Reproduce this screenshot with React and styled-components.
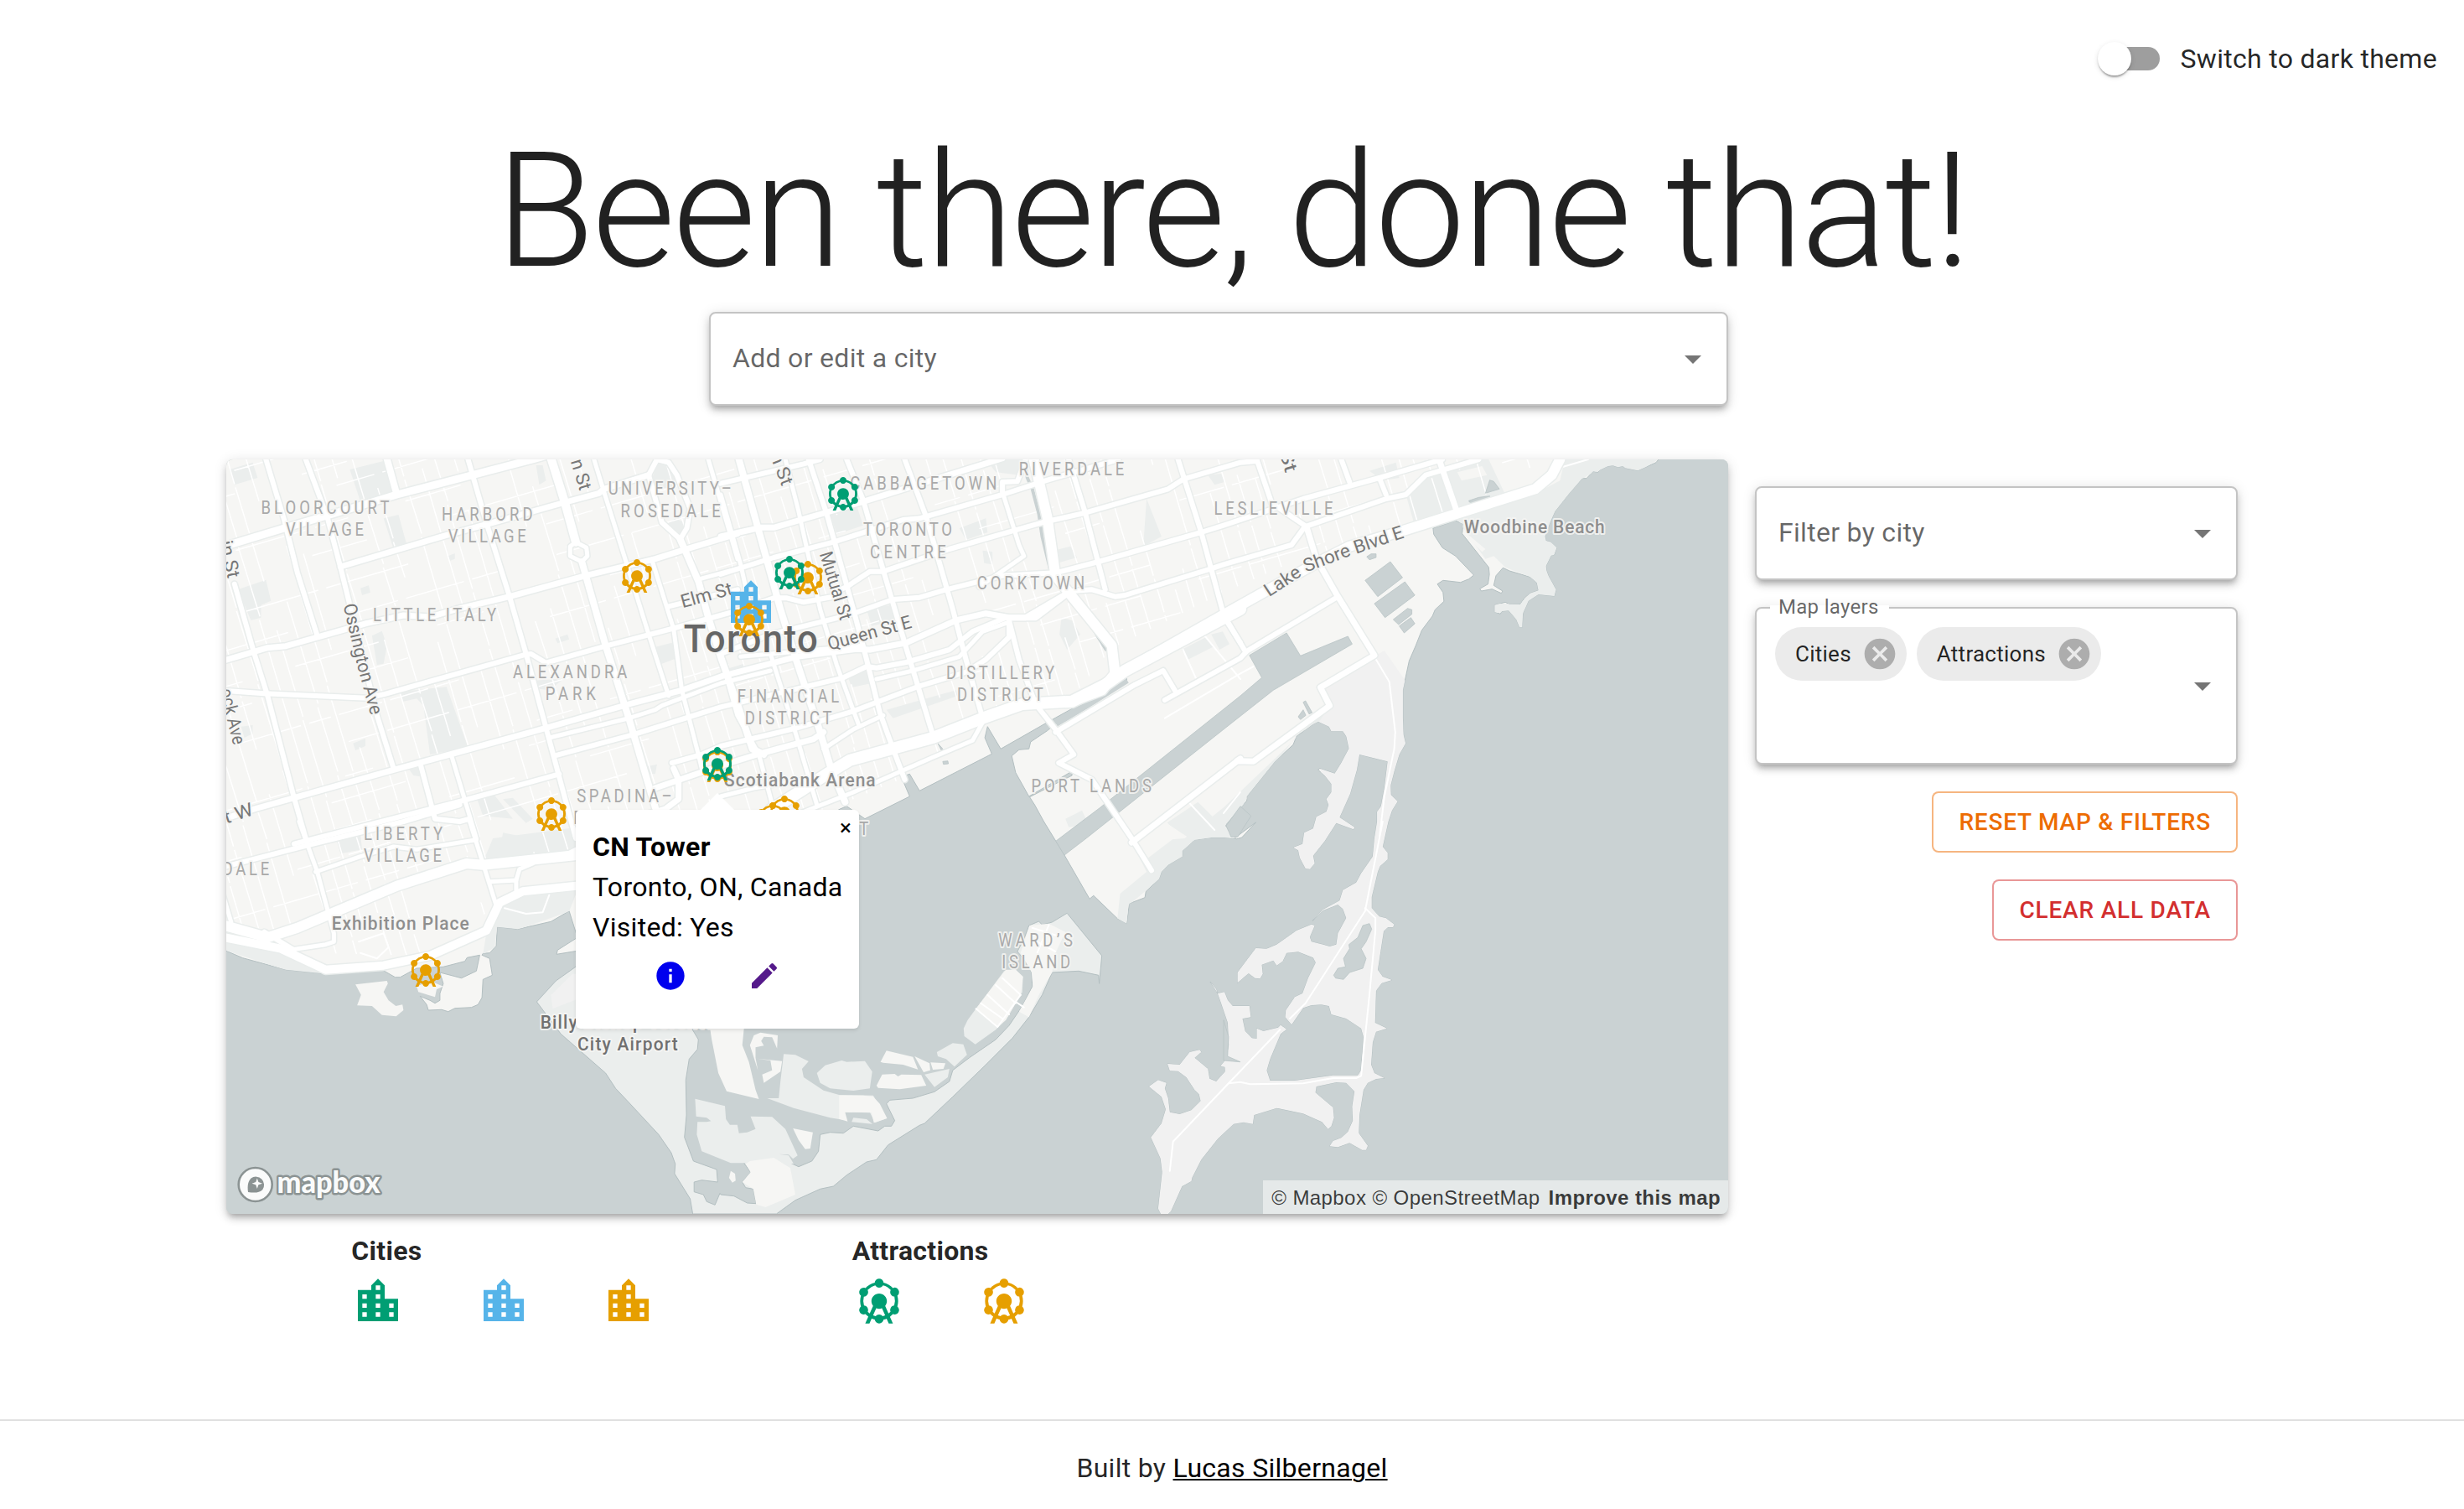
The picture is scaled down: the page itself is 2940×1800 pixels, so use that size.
import React from "react";
import styled, { createGlobalStyle } from "styled-components";
import {
  MdArrowDropDown,
  MdAttractions,
  MdCancel,
  MdEdit,
  MdInfo,
  MdLocationCity,
} from "react-icons/md";

const palette = {
  text: "rgba(0, 0, 0, 0.87)",
  muted: "rgba(0, 0, 0, 0.6)",
  green: "#009e73",
  blue: "#56b4e9",
  orange: "#e69f00",
  water: "#cad2d3",
  land: "#f6f6f4",
  park: "#ebeeed",
  spit: "#f1f1f1",
};

const GlobalStyle = createGlobalStyle`
  *, *::before, *::after { box-sizing: border-box; }
  body {
    margin: 0;
    background: #fff;
    color: ${palette.text};
    font-family: Roboto, "Liberation Sans", sans-serif;
    font-size: 32px;
    line-height: 1.5;
    letter-spacing: 0.00938em;
    -webkit-font-smoothing: antialiased;
  }
`;

const elevation =
  "0 6px 6px -4px rgba(0,0,0,.2), 0 6px 8px 0 rgba(0,0,0,.14), 0 2px 16px 0 rgba(0,0,0,.12)";

/* ---------- layout ---------- */

const Page = styled.div`
  display: flex;
  flex-direction: column;
  width: 2940px;
  height: 1800px;
`;

const Header = styled.header`
  display: flex;
  justify-content: flex-end;
  align-items: center;
  height: 140px;
  padding-right: 32px;
`;

const ThemeToggle = styled.label`
  display: flex;
  align-items: center;
  gap: 24px;
`;

const Track = styled.span`
  display: flex;
  align-items: center;
  width: 68px;
  height: 28px;
  border-radius: 14px;
  background: #9e9e9e;
`;

const Thumb = styled.span`
  width: 40px;
  height: 40px;
  flex: none;
  margin-left: -6px;
  border-radius: 50%;
  background: #fff;
  box-shadow: 0 4px 2px -2px rgba(0, 0, 0, 0.2), 0 2px 2px 0 rgba(0, 0, 0, 0.14),
    0 2px 6px 0 rgba(0, 0, 0, 0.12);
`;

const Title = styled.h1`
  margin: 0 0 8px;
  height: 224px;
  font-size: 192px;
  font-weight: 300;
  line-height: 224px;
  letter-spacing: -0.01562em;
  text-align: center;
`;

const Main = styled.main`
  display: grid;
  grid-template-columns: 1792px 576px;
  column-gap: 32px;
  padding-left: 270px;
`;

const SearchRow = styled.div`
  display: flex;
  justify-content: flex-end;
  grid-column: 1;
  height: 176px;
`;

const MapColumn = styled.div`
  grid-column: 1;
`;

const Sidebar = styled.aside`
  grid-column: 2;
  display: flex;
  flex-direction: column;
  align-items: flex-end;
  gap: 32px;
  padding-top: 32px;
`;

const Field = styled.div`
  position: relative;
  display: flex;
  align-items: ${(p) => (p.$tall ? "flex-start" : "center")};
  justify-content: space-between;
  width: ${(p) => p.$width}px;
  height: ${(p) => (p.$tall ? 188 : 112)}px;
  padding: ${(p) => (p.$tall ? "22px 16px 0 22px" : "0 16px 0 26px")};
  border: 2px solid #c4c4c4;
  border-radius: 8px;
  background: #fff;
  color: ${palette.muted};
  box-shadow: ${elevation};
`;

const Placeholder = styled.span`
  margin-bottom: 2px;
`;

const Caret = styled(MdArrowDropDown)`
  width: 48px;
  height: 48px;
  color: #757575;
  align-self: center;
  margin-top: ${(p) => (p.$raise ? "-22px" : "0")};
`;

const FieldLegend = styled.span`
  position: absolute;
  top: -20px;
  left: 16px;
  height: 36px;
  padding: 0 12px 0 10px;
  background: linear-gradient(transparent 16px, #fff 16px);
  font-size: 24px;
  line-height: 36px;
`;

const Chips = styled.div`
  display: flex;
  gap: 12px;
`;

const Chip = styled.span`
  display: flex;
  align-items: center;
  height: 64px;
  padding: 0 10px 0 24px;
  gap: 12px;
  border-radius: 32px;
  background: #ebebeb;
  color: ${palette.text};
  font-size: 26px;
  letter-spacing: 0.01em;

  svg {
    width: 44px;
    height: 44px;
    color: #adadad;
  }
`;

const OutlineButton = styled.button`
  height: 73px;
  margin: 0;
  padding: 0 30px;
  border: 2px solid ${(p) => p.$edge};
  border-radius: 8px;
  background: #fff;
  color: ${(p) => p.$ink};
  font: 500 28px/49px Roboto, sans-serif;
  letter-spacing: 0.02857em;
`;

/* ---------- map ---------- */

const MapCard = styled.section`
  position: relative;
  width: 1792px;
  height: 900px;
  border-radius: 8px;
  background: ${palette.water};
  box-shadow: ${elevation};
`;

const MapCanvas = styled.svg`
  display: block;
  border-radius: 8px;
`;

const Marker = styled.span`
  position: absolute;
  left: ${(p) => p.$x - 270}px;
  top: ${(p) => p.$y - 548}px;
  color: ${(p) => p.$tone};

  svg {
    display: block;
    width: ${(p) => p.$size}px;
    height: ${(p) => p.$size}px;
  }
`;

const Popup = styled.div`
  position: absolute;
  left: 417px;
  top: 418px;
  width: 338px;
  height: 261px;
  padding: 20px 20px 0;
  border-radius: 6px;
  background: #fff;
  color: #000;
  box-shadow: 0 2px 4px rgba(0, 0, 0, 0.1);
  white-space: nowrap;

  &::before {
    content: "";
    position: absolute;
    left: 149px;
    top: -20px;
    border: 20px solid transparent;
    border-top: 0;
    border-bottom-color: #fff;
  }
`;

const PopupTitle = styled.div`
  font-weight: 700;
`;

const PopupActions = styled.div`
  display: flex;
  justify-content: center;
  gap: 72px;
  padding: 14px 0 0 0;

  svg {
    width: 40px;
    height: 40px;
  }
`;

const CloseButton = styled.span`
  position: absolute;
  right: 8px;
  top: 5px;
  width: 16px;
  font-size: 26px;
  line-height: 32px;
  text-align: center;
`;

const Attribution = styled.div`
  position: absolute;
  right: 0;
  bottom: 0;
  height: 40px;
  padding: 1px 9px 0 10px;
  border-bottom-right-radius: 8px;
  background: rgba(255, 255, 255, 0.5);
  color: rgba(0, 0, 0, 0.75);
  font: 24px/40px "Liberation Sans", Arial, sans-serif;
  letter-spacing: 0.42px;
  white-space: nowrap;

  b {
    margin-left: 3px;
  }
`;

/* ---------- legend and footer ---------- */

const Legend = styled.div`
  display: grid;
  grid-template-columns: repeat(12, 1fr);
  width: 1792px;
  padding-top: 20px;
`;

const LegendGroup = styled.div`
  grid-column: ${(p) => p.$start} / span ${(p) => p.$span};
`;

const LegendTitle = styled.div`
  font-weight: 700;
  line-height: 48px;
`;

const LegendIcons = styled.div`
  display: grid;
  grid-template-columns: repeat(${(p) => p.$count}, 1fr);
  padding-top: 4px;

  svg {
    display: block;
    width: 64px;
    height: 64px;
  }
`;

const Footer = styled.footer`
  margin-top: auto;
  height: 107px;
  padding-top: 32px;
  border-top: 2px solid #e0e0e0;
  text-align: center;
`;

const AuthorLink = styled.a`
  color: #000;
  text-decoration: underline;
  text-decoration-thickness: 2px;
  text-underline-offset: 2px;
`;

/* ---------- map data ---------- */

/* Geometry is stored per survey sheet: a letter selects the sheet, the
   numbers after it are positions on that sheet. */
const SHEETS = {
  A: [260, 540],
  B: [860, 540],
  C: [1460, 540],
  D: [260, 980],
  E: [860, 980],
  F: [1460, 980],
};
const SX = 620 / 1568;
const SY = 1 / 3;

const project = (sheet, x, y) => [
  SHEETS[sheet][0] + x * SX,
  SHEETS[sheet][1] + y * SY,
];

function trace(source) {
  let sheet = "A";
  return source
    .trim()
    .split(/\s+/)
    .map((token) => {
      let t = token;
      if (/[A-F]/.test(t[0])) {
        sheet = t[0];
        t = t.slice(1);
      }
      const [x, y] = t.split(",").map(Number);
      return project(sheet, x, y)
        .map((n) => n.toFixed(1))
        .join(",");
    })
    .join(" ");
}

const MAINLAND =
  "A0,0 C1320,0 C1312,24 1305,35 1250,64 1212,55 1205,48 1190,52 1175,46 1160,48 1135,62 1130,70 1115,67 1095,92 1082,92 1040,150 1000,210 985,250 970,300 973,315 988,320 1005,340 998,365 988,368 973,405 974,420 980,440 1003,490 998,513 950,507 920,530 903,575 901,625 893,625 883,596 860,565 840,567 835,577 818,570 818,545 850,535 862,542 895,543 908,520 925,503 950,493 945,465 925,445 863,423 843,412 822,440 815,475 842,495 838,503 810,488 778,495 773,487 798,470 802,435 800,410 770,365 720,290 722,255 700,243 632,270 634,292 660,340 700,370 755,438 740,452 715,464 662,457 645,470 662,500 665,532 638,562 630,585 598,635 580,690 560,745 541,850 541,950 543,1010 549,1040 530,1080 515,1140 504,1190 505,1225 525,1248 508,1280 497,1320 F480,90 495,112 495,135 472,160 465,180 447,270 447,310 470,340 490,346 515,368 511,378 496,378 483,392 465,530 480,555 508,567 477,578 460,605 457,720 493,740 460,752 450,790 445,870 455,900 485,918 460,921 435,935 422,960 410,1050 408,1115 435,1160 430,1175 418,1175 380,1150 345,1165 320,1162 330,1143 355,1132 375,1110 390,1070 388,1020 395,965 370,935 340,933 280,948 277,970 330,1023 333,1060 325,1090 315,1100 297,1075 240,1045 160,1025 92,1050 88,1082 60,1076 30,1082 E1500,1135 1450,1210 1422,1275 1420,1287 1392,1305 1375,1350 1358,1395 1350,1404 1328,1404 1320,1385 1332,1255 1327,1205 1298,1130 1330,1080 1343,1030 1330,985 1292,948 1320,925 1345,935 1340,955 1350,990 1355,1040 1385,1047 1420,1033 1448,1000 1443,975 1430,960 1405,915 1380,893 1355,892 1348,867 1385,870 1415,825 1445,817 1450,825 1430,845 1470,885 1475,920 1495,930 1522,895 1521,878 1508,875 1525,850 1533,800 1530,720 1510,650 1495,600 1477,573 1500,615 1520,610 1530,640 1545,660 F78,660 82,700 57,705 65,750 85,775 100,777 100,740 120,750 165,737 172,728 190,743 172,760 140,850 130,890 140,927 215,927 330,908 405,908 415,890 422,770 415,740 370,705 325,690 318,660 295,655 265,657 240,667 205,727 186,700 188,675 215,628 238,615 255,560 278,505 270,487 225,466 190,470 178,500 160,515 150,497 115,512 118,545 110,562 95,560 75,543 42,577 42,540 97,453 130,455 160,440 220,390 265,368 275,372 260,413 265,430 300,440 320,447 340,440 345,400 370,345 360,313 345,297 300,318 268,355 300,315 350,283 360,245 400,218 415,185 450,125 455,60 463,0 C463,1285 475,1265 485,1200 495,1105 410,1080 402,1135 382,1220 350,1305 395,1340 392,1348 340,1325 305,1390 F270,122 275,150 260,170 247,168 230,130 225,103 210,93 238,80 243,40 270,25 C280,1303 310,1285 317,1260 310,1240 325,1215 325,1185 305,1155 285,1135 290,1130 335,1148 355,1110 378,1058 370,1015 360,997 325,997 318,980 285,962 272,970 220,1015 210,1045 155,1105 70,1230 70,1245 10,1325 5,1335 35,1378 97,1323 F55,57 40,62 E1520,57 1480,57 1430,65 1393,105 1393,125 1350,155 1330,180 1323,205 1283,250 1280,272 1233,293 1225,365 1197,347 1125,265 1113,277 1037,120 1011,70 975,0 B947,1260 932,1232 985,1200 1060,1155 1060,1140 930,1230 890,1145 878,1085 900,1063 930,1060 935,1035 985,995 1010,970 1225,820 1225,808 985,965 845,1060 805,980 797,1020 818,1078 600,1210 570,1150 545,1160 570,1230 435,1310 380,1265 360,1275 D1400,300 1100,460 1022,475 1025,460 1085,415 1060,320 1005,358 905,385 843,377 840,445 820,470 800,472 797,478 820,490 828,550 800,565 797,630 785,655 765,665 715,668 695,680 675,673 635,675 630,655 610,625 640,640 655,650 670,640 670,615 680,580 670,540 735,560 780,535 790,478 752,487 745,500 680,520 600,525 550,557 535,557 495,530 330,545 205,530 75,488 0,450";

const ISLANDS =
  "D962,645 1020,570 1085,515 1300,520 1430,740 1450,780 1447,815 1422,850 1412,925 1414,1050 1408,1130 1435,1215 1505,1245 1508,1290 1460,1283 1437,1290 1437,1325 1465,1335 1475,1360 1500,1372 1515,1330 E0,1335 40,1340 80,1365 107,1367 98,1315 75,1310 65,1290 90,1255 70,1222 110,1205 180,1205 235,1235 275,1215 295,1180 300,1120 330,1112 370,1115 400,1090 475,1107 495,1090 515,1090 525,1070 500,1010 510,997 580,990 645,967 690,930 700,890 750,845 830,780 870,730 910,660 940,590 938,540 920,500 895,465 915,420 930,372 960,357 970,370 1000,360 1045,328 1150,480 1142,580 1140,550 1080,535 1000,540 970,620 930,700 880,775 800,870 700,985 615,1080 600,1087 505,1157 470,1210 440,1218 380,1265 340,1305 300,1315 225,1355 168,1404 D1433,1404 1425,1350 1378,1260 1380,1225 1368,1185 1330,1120 1240,1005 1200,955 1170,900 1035,760";

const ISLETS = [
  ["park", "D1440,992 1530,1018 1533,1065 1545,1085 E50,1085 55,1115 80,1112 105,1100 90,1055 155,1057 195,1100 232,1195 218,1207 205,1192 175,1190 205,1195 220,1225 70,1222 30,1222 D1460,1180 1445,1120 1447,1075 1475,1075 1488,1072 1475,1060 1443,1055"],
  ["land", "D1480,700 1490,780 1510,900 1535,965 E115,993 105,960 85,860 65,800 70,740 60,700"],
  ["land", "E120,755 172,765 170,812 155,772 130,770 122,785 130,802 105,808 105,845 112,890 88,800 100,765"],
  ["land", "E108,848 140,852 185,857 180,895 130,935 125,905 155,890 150,855"],
  ["park", "E190,832 225,835 265,858 245,885 250,915 310,962 357,978 460,980 500,1062 465,1078 450,1040 375,1040 372,1068 330,1060 220,1025 140,990 175,990 180,930"],
  ["land", "E357,980 430,980 460,985 480,1010 502,1062 462,1078 455,1042 375,1040 383,1073 357,1064"],
  ["park", "E395,1075 400,1060 440,1065 458,1082"],
  ["park", "E290,900 315,872 365,855 380,860 435,857 457,895 450,955 400,963 330,955 300,935"],
  ["land", "E482,860 500,820 580,842 595,887 550,870 490,863"],
  ["land", "E585,840 630,865 632,890 612,897"],
  ["land", "E633,862 678,865 672,885 640,888"],
  ["park", "E615,905 690,885 685,915 645,950"],
  ["land", "E470,945 487,905 525,903 535,912 545,905 605,907 620,945 540,958 475,953"],
  ["park", "E652,825 700,793 732,797 743,835 705,877 680,850 655,840"],
  ["park", "E733,740 745,710 770,670 855,535 890,530 912,555 910,610 860,710 830,745 768,797 735,768"],
  ["land", "E770,670 860,530 890,530 912,555 905,620 860,710 835,735"],
  ["land", "E218,1098 278,1112 270,1170 255,1172 235,1140"],
  ["land", "E88,1215 160,1203 210,1240 225,1335 135,1380 107,1370 98,1315 65,1290 90,1255 75,1225"],
  ["land", "E30,1250 43,1260 45,1285 35,1292 25,1275"],
  ["land", "E932,372 990,365 1040,395 1010,470 1000,540 960,620 930,700 900,680 942,590 938,540 905,470"],
  ["spit", "D1005,620 1070,545 1085,545 1085,635 1010,670"],
  ["land", "D415,583 510,570 513,580 500,610 515,640 537,660 557,655 560,675 538,697 495,692 465,660 420,658 432,620"],
  ["land", "D600,590 605,610 655,628 660,600 680,590 640,570"],
];

const WATER = [
  "E1011,70 B1145,1270 1568,870 C115,805 78,725 190,645 232,727 375,657 388,685 150,850 0,990 B1103,1380 E1037,120",
  "C427,457 503,390 540,447 465,515",
  "C455,540 547,462 577,510 487,590",
  "C512,597 555,557 568,562 568,578 528,615",
  "C530,620 565,590 577,612 545,645",
  "C432,372 445,362 460,362 460,375 440,383",
  "C790,145 803,98 815,103 832,130",
  "C740,172 770,160 803,155 803,165 770,182 742,177",
  "C240,893 247,888 267,930 258,935",
  "C225,945 240,920 248,940 232,955",
  "F332,550 345,525 368,520 362,490 380,455 378,440 405,415 420,372 440,365 447,385 430,430 415,455 430,490 420,525 380,540 362,565 338,560",
  "E1568,860 F0,855 0,710 15,770 12,840",
  "B1525,1335 1568,1265 1600,1300 1560,1375 1540,1375",
  "B655,1040 670,1060 668,1070",
  "B670,1105 685,1103 687,1113 672,1115",
];

const PARKS = [
  "A35,60 105,35 120,90 50,115",
  "A398,60 520,24 540,150 430,175",
  "A500,235 545,222 570,330 530,345",
  "A60,490 145,455 160,530 130,545 130,590 100,600",
  "A550,855 690,838 755,1055 640,1080 620,905 600,880 560,890",
  "A465,655 495,638 510,690 500,755 480,760",
  "A955,815 1045,808 1000,850 970,845",
  "A1310,90 1330,35 1362,45 1382,85 1372,130 1315,120",
  "A1350,260 1380,235 1420,255 1395,300",
  "A1305,700 1370,680 1385,735 1330,760",
  "A778,1225 828,1215 890,1310 800,1300",
  "A575,1130 605,1120 618,1160 590,1155",
  "A860,1240 890,1235 950,1310 930,1325",
  "A408,1040 445,1022 445,1050 415,1065",
  "A70,980 105,975 105,1005 80,1020",
  "A695,370 715,360 715,380 700,387",
  "A1018,665 1055,650 1060,668 1025,682",
  "A430,485 455,475 460,500 435,510",
  "A1285,1125 1325,1115 1320,1150 1290,1150",
  "A960,45 980,45 990,100 970,115",
  "B330,220 410,190 430,260 350,292",
  "B720,270 800,235 805,285 740,312",
  "B440,560 515,545 530,600 455,620",
  "B1028,590 1060,600 1085,650 1045,705 1022,650",
  "B1390,705 1465,660 1485,695 1410,740",
  "B1480,650 1515,640 1535,685 1505,705",
  "B800,24 920,24 900,80 830,70",
  "B1285,165 1330,300 1275,335",
  "B1005,350 1055,335 1075,375 1015,395",
  "B1345,1325 1440,1250 1550,1380 1440,1400",
  "B380,790 445,775 455,825 395,840",
  "B1470,80 1510,75 1520,105 1490,115",
  "B790,350 820,355 820,400 795,395",
  "B500,920 620,880 710,850 715,870 520,950",
  "B0,780 70,755 75,770 0,790",
  "B1040,1310 1090,1280 1110,1330 1050,1340",
  "C550,150 610,85 650,65 700,215 575,255",
  "C660,60 780,24 800,24 850,150 705,212",
  "C440,65 520,35 530,90 480,100",
  "C700,230 950,140 1015,100 1030,24 1312,24 1250,70 1175,50 1110,74 1082,94 1000,212 975,300 1007,340 980,410 1006,490 1000,515 950,510 920,535 904,630 890,630 860,567 815,575 815,540 895,540 925,500 947,493 925,445 850,410 815,370 790,380 735,290",
  "D25,425 190,465 325,535 500,525 330,548 205,532 25,462",
  "D840,300 890,255 1090,230 1060,322 905,387 843,379 835,450 800,475 810,400",
  "D830,60 1085,20 1085,110 800,145",
  "D355,55 430,40 435,100 370,115",
  "D860,40 945,60 930,110 850,110",
  "D1380,740 1450,780 1420,840",
  "E1205,258 1285,180 1240,75 1400,60 C0,1270 150,1100 272,960 320,905 290,960 220,1015 70,1240 0,1380 E1400,130 1230,300 1225,370 1197,347",
];

const PALE_BLOCKS = [
  "C705,70 780,48 795,80 718,100",
  "C720,285 735,290 790,345 780,355",
  "E1245,75 1345,0 1378,50 1290,130",
];

const SPIT =
  "C460,725 485,708 548,815 640,1400 F640,1404 E1250,1404 1250,780 1460,560 F30,570 200,60 C200,1380 C300,1200 270,960 325,905 295,840";

/* width in px, then the route */
const ROADS = [
  [9, "A0,342 200,270 430,190 540,150 950,24 1020,0"],
  [7, "A370,408 690,295 830,250 1040,180 1150,145 1165,130 1300,80"],
  [7, "A0,750 150,698 205,692 450,610 560,582 640,588 720,560 880,515 1110,440 1320,380 1400,350 1568,290"],
  [6, "A0,850 140,862 450,878 500,865 930,722 945,720 990,752 1170,692 1370,630 1568,565 B160,520 200,520 250,535 340,515"],
  [7, "A0,1318 110,1275 230,1235 530,1135 700,1080 990,985 1240,900 1400,850 1520,800 B230,730 410,703 450,705 560,680 710,600 800,575 870,590 950,590 1050,500"],
  [5, "A1000,1020 1240,950 1320,920 1340,905 B0,825 150,780"],
  [6, "A1015,1085 1250,1010 B0,910 370,805 440,765 470,770 560,750 690,705 760,640 860,590"],
  [6, "A230,1400 740,1245 1030,1150"],
  [6, "A1370,1110 1460,1080 B0,1050 160,1005 230,985 400,925 600,835 740,785 800,740 870,660 870,600"],
  [6, "A145,24 200,240 240,430 300,655"],
  [6, "A265,24 330,230 370,410 420,650 480,940 530,1130"],
  [8, "A505,0 540,150"],
  [6, "A755,24 810,250 880,515 930,720 990,985 1080,1380"],
  [10, "A1000,0 1045,170 1080,320"],
  [5, "A1080,320 1063,335 1063,370 1098,390 1115,370 1112,340 1080,320"],
  [8, "A1098,390 1170,690 1240,950 1320,1270"],
  [5, "A1135,24 1165,140 1230,385 1300,650 1360,870"],
  [6, "A50,470 110,720 150,870 230,1235 265,1380"],
  [6, "A1395,310 1340,250 1300,80 1325,24 1360,35 1385,80 1425,200 1415,270 1395,310"],
  [8, "A1395,310 1410,350 1450,460 1480,590 1520,740 1568,900 B95,1060 130,1080"],
  [5, "A1310,385 1375,630 1400,850 1450,1080 1460,1130"],
  [5, "A1480,24 1568,380"],
  [6, "A610,1110 655,1310 730,1320 760,1310"],
  [5, "A705,1085 780,1380"],
  [6, "A1360,550 1568,490"],
  [5, "A1445,455 1568,415"],
  [7, "A1320,1200 B0,1120 110,1080 280,1025 310,1000"],
  [7, "A1375,1130 1390,1170 1390,1240 1350,1275 1080,1370"],
  [6, "B0,110 250,40 300,24"],
  [7, "B0,300 120,268 160,268 330,210 430,175 850,20"],
  [6, "B850,140 850,105 895,103 920,24"],
  [6, "B0,435 160,375 340,320 550,240 600,235 850,150 980,100 1200,24"],
  [6, "B340,500 380,480 450,425 490,425 690,345 880,280 970,250 1100,215 1350,130 1395,95 1568,35 C100,30"],
  [6, "B0,720 150,650 390,580 520,525 600,518 680,490 850,440 1010,430 1140,390 1450,285 C0,260 240,165 470,90 660,24"],
  [6, "B1060,495 1120,490 1190,515 1220,510 1480,415 C0,400 205,330 245,265 490,165 550,150 610,80 770,24"],
  [5, "B60,730 430,690"],
  [5, "B470,810 580,780 720,730 790,640 860,610"],
  [5, "B310,1060 400,990 490,940"],
  [14, "B150,1280 320,1150 390,1100 640,1020 790,950 910,900 1060,890 1160,830 1220,780 1568,560"],
  [12, "B1220,780 C0,580 150,480 280,395 380,335 540,280 700,220 940,130 990,80 1015,24"],
  [5, "B240,1290 390,1220 640,1090 760,1030 790,965"],
  [5, "B0,1230 100,1200 250,1170"],
  [8, "B55,24 110,260 150,430 180,560 230,750 300,1000 335,1140 375,1250"],
  [5, "B0,150 60,400 90,560"],
  [6, "B265,24 320,220 400,560 440,740 480,930 520,1060 555,1170"],
  [6, "B380,24 430,170 490,420 560,700 640,1010"],
  [6, "B555,24 620,230 700,560 740,740 790,950"],
  [5, "B195,24 235,210 300,560 350,760 415,970"],
  [5, "B0,730 50,940 115,1080 160,1280"],
  [5, "B150,720 220,980 290,1260"],
  [12, "B940,0 985,230 1010,440 1050,500 1180,690 1190,790 1150,850 1060,890"],
  [5, "B850,140 900,330 915,370 780,480"],
  [6, "B870,600 900,740 950,900 1010,990 1065,1080 1020,1110 1120,1170 1240,1380 E1300,175"],
  [6, "B1010,1000 1250,830 1335,780 1370,850"],
  [6, "B1340,885 1568,735 C70,710 345,515"],
  [6, "B1380,24 1450,285 1520,590 1568,680"],
  [6, "B1050,24 1100,215 1160,490"],
  [7, "B1050,500 920,590 860,590"],
  [7, "E1240,75 B1568,1095 C40,1103 90,1105 320,905 292,840 455,725 345,515 280,380 250,265"],
  [6, "C100,24 145,180 250,265"],
  [6, "C355,24 380,105"],
  [6, "C470,90 490,150"],
  [7, "C650,24 705,215"],
  [6, "C0,580 65,710"],
  [6, "D0,168 270,85 560,0 730,-60"],
  [5, "D245,0 300,180 350,400 350,430 325,440 215,460"],
  [5, "D295,180 430,125 530,90 600,100 780,65"],
  [5, "D760,0 840,300"],
  [12, "D0,365 150,415 240,380 540,230 750,150 800,155 1100,118"],
  [10, "D0,410 190,455 325,530 500,515 640,480 810,390 850,290 920,250 1100,228"],
  [5, "D820,215 900,210 900,245"],
  [5, "D900,210 910,170 950,150"],
  [5, "D0,200 40,360"],
  [6, "D140,395 230,460"],
  [6, "D1050,120 1100,90"],
];

const TRAILS = [
  "C460,740 500,820 518,1000 515,1060 485,1230 470,1380 F480,0 427,320 247,650 200,705",
  "F427,310 458,345 458,390 440,620 415,910 400,918 330,918 240,937 80,940 50,932 15,937 E1365,1145 1355,1250",
  "F170,745 15,937",
  "E850,560 905,620",
  "E830,585 890,650",
  "E805,620 870,690",
  "E785,650 850,705",
  "E770,670 835,735 905,620",
  "E890,645 915,665",
  "E940,380 1020,410",
  "E955,430 1010,465",
  "E990,370 955,470",
  "B1340,950 1568,790 C90,765",
  "B1415,1255 1490,1350",
  "B1395,705 1435,810",
  "B1460,655 1568,810",
  "D865,310 930,330 980,325 1000,262",
  "D425,430 500,400 515,450 480,490 430,470",
  "C1025,50 1100,24",
  "C0,1290 50,1215",
];

/* Residential streets follow the rotated city grid. */
function sideStreets() {
  const lines = [];
  const tilt = (-16.2 * Math.PI) / 180;
  const cos = Math.cos(tilt);
  const sin = Math.sin(tilt);
  let seed = 7;
  const rand = () => {
    seed = (seed * 16807) % 2147483647;
    return seed / 2147483647;
  };
  const add = (u1, v1, u2, v2) => {
    const p = (u, v) =>
      `${(270 + u * cos - v * sin).toFixed(1)} ${(548 + u * sin + v * cos).toFixed(1)}`;
    lines.push(`M${p(u1, v1)}L${p(u2, v2)}`);
  };
  for (let u = -200; u < 1700; u += 15 + rand() * 9) {
    let v = -20;
    while (v < 1000) {
      const length = 40 + rand() * 95;
      if (rand() > 0.34) add(u, v, u + rand() * 2, v + length);
      v += length + 4;
    }
  }
  for (let v = -20; v < 1000; v += 24 + rand() * 20) {
    let u = -200;
    while (u < 1700) {
      const length = 25 + rand() * 80;
      if (rand() > 0.52) add(u, v, u + length, v);
      u += length + 10;
    }
  }
  return lines.join("");
}

/* sheet, left, right, baseline, text, style */
const LABELS = [
  ["A", 130, 517, 220, "BLOORCOURT", "area"],
  ["A", 205, 440, 298, "VILLAGE", "area"],
  ["A", 675, 950, 243, "HARBORD", "area"],
  ["A", 695, 930, 320, "VILLAGE", "area"],
  ["A", 468, 840, 602, "LITTLE ITALY", "area"],
  ["A", 890, 1235, 806, "ALEXANDRA", "area"],
  ["A", 988, 1140, 885, "PARK", "area"],
  ["A", 1178, 1550, 150, "UNIVERSITY–", "area"],
  ["A", 1215, 1517, 230, "ROSEDALE", "area"],
  ["A", 1083, 1370, 1250, "SPADINA–", "area"],
  ["A", 1073, 1095, 1328, "F", "area"],
  ["D", 440, 678, 67, "LIBERTY", "area"],
  ["D", 440, 675, 145, "VILLAGE", "area"],
  ["D", 14, 155, 193, "DALE", "area"],
  ["B", 390, 833, 132, "CABBAGETOWN", "area"],
  ["B", 900, 1217, 82, "RIVERDALE", "area"],
  ["B", 430, 698, 298, "TORONTO", "area"],
  ["B", 450, 680, 378, "CENTRE", "area"],
  ["B", 773, 1098, 490, "CORKTOWN", "area"],
  ["B", 680, 1007, 810, "DISTILLERY", "area"],
  ["B", 713, 973, 888, "DISTRICT", "area"],
  ["B", 50, 357, 893, "FINANCIAL", "area"],
  ["B", 73, 335, 972, "DISTRICT", "area"],
  ["B", 937, 1300, 1215, "PORT LANDS", "area"],
  ["B", 418, 445, 1367, "T", "area"],
  ["C", -29, 330, 222, "LESLIEVILLE", "area"],
  ["E", 838, 1062, 447, "WARD’S", "area"],
  ["E", 848, 1055, 526, "ISLAND", "area"],
  ["B", 10, 467, 1193, "Scotiabank Arena", "place"],
  ["C", 725, 1150, 287, "Woodbine Beach", "place"],
  ["D", 343, 758, 387, "Exhibition Place", "place"],
  ["D", 973, 1500, 740, "Billy Bishop Toronto", "airport"],
  ["D", 1085, 1388, 818, "City Airport", "airport"],
  ["B", -112, 293, 713, "Toronto", "city"],
];

/* route, text, length in px */
const STREET_NAMES = [
  ["A378,545 420,760 462,945", "Ossington Ave", 136],
  ["A1402,556 1560,505", "Elm St", 63],
  ["B298,362 364,614", "Mutual St", 84],
  ["B328,707 590,622", "Queen St E", 103],
  ["C137,517 255,425 380,370 555,300", "Lake Shore Blvd E", 178],
  ["A1055,-5 1096,155", "on St", 50],
  ["A5,320 34,470", "in St", 45],
  ["A-5,1340 115,1293", "st W", 48],
  ["A5,850 50,1065", "ock Ave", 68],
  ["B148,10 186,125", "h St", 40],
  ["C168,0 190,85", "St", 26],
];

const MapText = styled.text`
  font-family: Roboto, "Liberation Sans", sans-serif;
  letter-spacing: 0;
  paint-order: stroke;
  stroke: rgba(246, 246, 244, 0.85);
  stroke-width: 4px;
  stroke-linejoin: round;
  fill: ${(p) =>
    ({ area: "#a9a9a9", place: "#8e8e8e", airport: "#707070", city: "#666", street: "#777" })[p.$kind]};
  font-size: ${(p) => ({ area: 21.5, place: 22.5, airport: 22.5, city: 46, street: 22 })[p.$kind]}px;
  font-weight: ${(p) => ({ area: 400, place: 500, airport: 500, city: 500, street: 400 })[p.$kind]};
`;

/* Condensed widths per label style. */
const SQUEEZE = { area: 0.86, place: 0.93, airport: 0.93, city: 0.95 };

const Shape = ({ points, ...rest }) => <polygon points={trace(points)} {...rest} />;

function BaseMap() {
  return (
    <MapCanvas width="1792" height="900" viewBox="270 548 1792 900">
      <defs>
        <clipPath id="mainland">
          <polygon points={trace(MAINLAND)} />
        </clipPath>
        <clipPath id="streets">
          <polygon
            points={trace(
              "A0,0 C1000,0 700,215 540,280 250,370 0,500 B1180,700 1050,890 790,950 560,1160 300,1290 D1085,100 750,150 540,230 840,300 640,480 300,470 0,350"
            )}
          />
        </clipPath>
      </defs>
      <rect x="270" y="548" width="1792" height="900" fill={palette.water} />
      <Shape points={MAINLAND} fill={palette.land} stroke="#b3bfc1" strokeWidth="1" />
      <g clipPath="url(#mainland)">
        <Shape points={SPIT} fill={palette.spit} />
        {PARKS.map((p) => (
          <Shape key={p} points={p} fill={palette.park} />
        ))}
        {PALE_BLOCKS.map((p) => (
          <Shape key={p} points={p} fill={palette.land} />
        ))}
        <path
          d={sideStreets()}
          clipPath="url(#streets)"
          fill="none"
          stroke="#fff"
          strokeWidth="1.5"
        />
      </g>
      <Shape points={ISLANDS} fill={palette.park} stroke="#b3bfc1" strokeWidth="1" />
      {ISLETS.map(([tone, p]) => (
        <Shape key={p} points={p} fill={palette[tone]} />
      ))}
      {WATER.map((p) => (
        <Shape key={p} points={p} fill={palette.water} stroke="#b9c4c5" strokeWidth="0.8" />
      ))}
      <g fill="none" strokeLinejoin="round" strokeLinecap="round">
        <polyline points={trace("B915,0 925,90 940,130 960,220 970,300 997,432")} stroke={palette.water} strokeWidth="4" />
        <polyline points={trace("B1052,525 1100,590 1130,640 1163,703")} stroke={palette.water} strokeWidth="5" />
        <polyline points={trace("B1010,968 1100,905 1225,812")} stroke={palette.water} strokeWidth="9" strokeLinecap="butt" />
        {TRAILS.map((p) => (
          <polyline key={p} points={trace(p)} stroke="#fff" strokeWidth="2" />
        ))}
        {ROADS.map(([w, p]) => (
          <polyline key={p} points={trace(p)} stroke="#e9edec" strokeWidth={w + 3} />
        ))}
        {ROADS.map(([w, p]) => (
          <polyline key={p} points={trace(p)} stroke="#fff" strokeWidth={w} />
        ))}
      </g>
      {LABELS.map(([sheet, x1, x2, y, text, kind]) => {
        const [left, base] = project(sheet, x1, y);
        const squeeze = SQUEEZE[kind];
        return (
          <MapText
            key={text + left}
            transform={`translate(${left} ${base}) scale(${squeeze} 1)`}
            $kind={kind}
            textLength={((x2 - x1) * SX) / squeeze}
          >
            {text}
          </MapText>
        );
      })}
      {STREET_NAMES.map(([route, text, length], i) => (
        <React.Fragment key={text + i}>
          <path id={`street-${i}`} d={`M${trace(route)}`} fill="none" />
          <MapText $kind="street" textLength={length} lengthAdjust="spacingAndGlyphs">
            <textPath href={`#street-${i}`} textLength={length} lengthAdjust="spacingAndGlyphs">
              {text}
            </textPath>
          </MapText>
        </React.Fragment>
      ))}
      <circle cx="304.700" cy="1413" r="20" fill="#fafbfb" stroke="#8b9393" strokeWidth="2.600" />
      <path
        d="M296 1422c-1-8 0-13 3.500-16.500a9.800 9.800 0 0 1 13.700 13.700c-3.500 3.500-9 4-17.200 2.800z"
        fill="#8b9393"
      />
      <path d="M306.800 1405.500l1.600 4.600 4.600 1.600-4.600 1.600-1.600 4.600-1.600-4.600-4.600-1.600 4.600-1.600z" fill="#fafbfb" />
      <text
        x="330.500"
        y="1422.500"
        textLength="123"
        lengthAdjust="spacingAndGlyphs"
        fontFamily="Lato, sans-serif"
        fontWeight="900"
        fontSize="36"
        letterSpacing="0"
        fill="#fafbfb"
        stroke="#8b9393"
        strokeWidth="5"
        strokeLinejoin="round"
        paintOrder="stroke"
      >
        mapbox
      </text>
    </MapCanvas>
  );
}

const MARKERS = [
  ["ride", 736.2, 662.7, "orange"],
  ["ride", 832.4, 888.5, "orange"],
  ["ride", 831.9, 886.7, "green"],
  ["ride", 633.8, 946.7, "orange"],
  ["ride", 981.9, 564.5, "green"],
  ["ride", 940.4, 664.5, "orange"],
  ["ride", 917.9, 658.5, "green"],
  ["city", 863.9, 687.3, "blue"],
  ["ride", 870, 714.7, "orange"],
  ["ride", 898, 953, "orange"],
  ["ride", 912.3, 944.7, "orange"],
  ["ride", 483.9, 1132.7, "orange"],
];

function LayerChip({ children }) {
  return (
    <Chip>
      {children}
      <MdCancel />
    </Chip>
  );
}

export default function App() {
  return (
    <>
      <GlobalStyle />
      <Page>
        <Header>
          <ThemeToggle>
            <Track>
              <Thumb />
            </Track>
            Switch to dark theme
          </ThemeToggle>
        </Header>
        <Title>Been there, done that!</Title>
        <Main>
          <SearchRow>
            <Field $width={1216}>
              <Placeholder>Add or edit a city</Placeholder>
              <Caret />
            </Field>
          </SearchRow>
          <MapColumn>
            <MapCard>
              <BaseMap />
              {MARKERS.map(([kind, x, y, tone]) => (
                <Marker key={`${x}-${y}`} $x={x} $y={y} $tone={palette[tone]} $size={kind === "city" ? 64 : 48}>
                  {kind === "city" ? <MdLocationCity /> : <MdAttractions />}
                </Marker>
              ))}
              <Popup>
                <CloseButton>×</CloseButton>
                <PopupTitle>CN Tower</PopupTitle>
                <div>Toronto, ON, Canada</div>
                <div>Visited: Yes</div>
                <PopupActions>
                  <MdInfo color="#0000ee" />
                  <MdEdit color="#551a8b" />
                </PopupActions>
              </Popup>
              <Attribution>
                © Mapbox © OpenStreetMap <b>Improve this map</b>
              </Attribution>
            </MapCard>
            <Legend>
              <LegendGroup $start={2} $span={3}>
                <LegendTitle>Cities</LegendTitle>
                <LegendIcons $count={3}>
                  <MdLocationCity color={palette.green} />
                  <MdLocationCity color={palette.blue} />
                  <MdLocationCity color={palette.orange} />
                </LegendIcons>
              </LegendGroup>
              <LegendGroup $start={6} $span={2}>
                <LegendTitle>Attractions</LegendTitle>
                <LegendIcons $count={2}>
                  <MdAttractions color={palette.green} />
                  <MdAttractions color={palette.orange} />
                </LegendIcons>
              </LegendGroup>
            </Legend>
          </MapColumn>
          <Sidebar>
            <Field $width={576}>
              <Placeholder>Filter by city</Placeholder>
              <Caret />
            </Field>
            <Field $width={576} $tall>
              <FieldLegend>Map layers</FieldLegend>
              <Chips>
                <LayerChip>Cities</LayerChip>
                <LayerChip>Attractions</LayerChip>
              </Chips>
              <Caret $raise />
            </Field>
            <OutlineButton $ink="#ed6c02" $edge="rgba(237, 108, 2, 0.5)">
              RESET MAP &amp; FILTERS
            </OutlineButton>
            <OutlineButton $ink="#d32f2f" $edge="rgba(211, 47, 47, 0.5)">
              CLEAR ALL DATA
            </OutlineButton>
          </Sidebar>
        </Main>
        <Footer>
          Built by <AuthorLink>Lucas Silbernagel</AuthorLink>
        </Footer>
      </Page>
    </>
  );
}
